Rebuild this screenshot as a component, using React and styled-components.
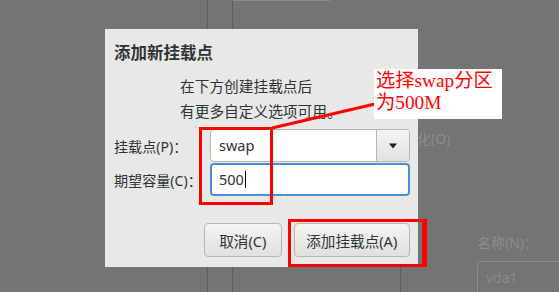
import React from 'react'
import styled, { createGlobalStyle } from 'styled-components'

const Global = createGlobalStyle`
  html, body { margin: 0; padding: 0; }
  body {
    width: 559px;
    height: 292px;
    overflow: hidden;
    font-family: "Noto Sans", "Noto Sans CJK SC", sans-serif;
  }
`

const Screen = styled.div`
  position: relative;
  width: 559px;
  height: 292px;
  background: #747474;
  display: flex;
  overflow: hidden;
`

const Pane = styled.div`
  width: ${p => p.w}px;
  height: 100%;
  border-right: 1px solid #5f5f5f;
  flex-shrink: 0;
  box-sizing: border-box;
`

const Main = styled.div`
  flex: 1;
  display: flex;
  flex-direction: column;
  color: #8c8c8c;
  font-size: 14px;
`

const TopButton = styled.div`
  width: 97px;
  height: 11px;
  border: 1px solid #8a8a8a;
  border-top: none;
  border-radius: 0 0 4px 4px;
  background: #7a7a7a;
  box-sizing: border-box;
`

const FaintText = styled.div`
  margin: 128px 0 0 184px;
  height: 20px;
  line-height: 20px;
`

const BottomArea = styled.div`
  flex: 1;
  display: flex;
  margin-top: 92px;
`

const BottomLine = styled.div`
  width: 167px;
  border-right: 1px solid #5f5f5f;
  margin-top: 23px;
`

const Field = styled.div`
  margin-left: 76px;
  flex: 1;
  display: flex;
  flex-direction: column;
`

const FieldLabel = styled.div`
  height: 20px;
  line-height: 20px;
  margin-top: -8px;
`

const FieldInput = styled.div`
  margin-top: 8px;
  flex: 1;
  border: 1px solid #8a8a8a;
  border-right: none;
  border-bottom: none;
  border-radius: 4px 0 0 0;
  padding: 6px 8px;
  color: #8a8a8a;
`

const Dialog = styled.div`
  position: absolute;
  left: 105px;
  top: 29px;
  width: 313px;
  height: 238px;
  background: #e8e8e7;
  box-sizing: border-box;
  padding: 9px 8px 0 9px;
  color: #2e3436;
  display: flex;
  flex-direction: column;
`

const Title = styled.div`
  font-size: 16.5px;
  font-weight: bold;
  line-height: 28px;
  font-family: "Noto Sans CJK SC", sans-serif;
`

const Desc = styled.div`
  margin: 7px 0 0 66px;
  font-size: 14.7px;
  line-height: 25px;
  font-family: "Noto Sans CJK SC", sans-serif;
`

const Form = styled.div`
  margin-top: 6px;
  display: grid;
  grid-template-columns: 96px 200px;
  row-gap: 1px;
  align-items: center;
`

const Label = styled.div`
  font-size: 14.1px;
  font-family: "Noto Sans", "Noto Sans CJK SC", sans-serif;
`

const Combo = styled.div`
  height: 33px;
  display: flex;
  border: 1px solid #b6b6b3;
  border-radius: 4px;
  box-sizing: border-box;
  background: #fff;
  overflow: hidden;
`

const ComboText = styled.div`
  flex: 1;
  padding-left: 8px;
  line-height: 31px;
  font-size: 14.5px;
`

const ComboButton = styled.div`
  width: 32px;
  border-left: 1px solid #b6b6b3;
  background: linear-gradient(#f4f4f4, #e2e2e0);
  display: flex;
  align-items: center;
  justify-content: center;
`

const Entry = styled.div`
  height: 33px;
  border: 2px solid #4a90d9;
  border-radius: 4px;
  box-sizing: border-box;
  background: #fff;
  padding-left: 7px;
  line-height: 29px;
  font-size: 14.5px;
  display: flex;
  align-items: center;
`

const Caret = styled.span`
  display: inline-block;
  width: 1px;
  height: 17px;
  background: #000;
  margin-left: 1px;
`

const Buttons = styled.div`
  margin-top: 27px;
  display: flex;
  gap: 12px;
  padding-left: 90px;
`

const Button = styled.div`
  width: ${p => p.w}px;
  height: 34px;
  box-sizing: border-box;
  border: 1px solid #b6b6b3;
  border-radius: 4px;
  background: linear-gradient(#f4f4f3, #e0e0de);
  display: flex;
  align-items: center;
  justify-content: center;
  font-size: 14.6px;
  color: #2e3436;
  font-family: "Noto Sans", "Noto Sans CJK SC", sans-serif;
`

const Mark = styled.div`
  position: absolute;
  left: ${p => p.x}px;
  top: ${p => p.y}px;
  width: ${p => p.w}px;
  height: ${p => p.h}px;
  border: 3px solid #ff0000;
  border-right-width: ${p => p.r || 3}px;
  box-sizing: border-box;
`

const Note = styled.div`
  position: absolute;
  left: 374px;
  top: 69px;
  width: 128px;
  height: 50px;
  background: #fff;
  color: #ff0000;
  box-sizing: border-box;
  padding: 1px 0 0 2px;
  font-family: "Liberation Serif", "Noto Sans CJK SC", serif;
  font-size: 19.3px;
  line-height: 22px;
  white-space: nowrap;
`

const Arrow = styled.svg`
  position: absolute;
  left: 0;
  top: 0;
  pointer-events: none;
`

export default function App() {
  return (
    <>
      <Global />
      <Screen>
        <Pane w={208} />
        <Pane w={25} />
        <Main>
          <TopButton />
          <FaintText>化(O)</FaintText>
          <BottomArea>
            <BottomLine />
            <Field>
              <FieldLabel>名称(N)：</FieldLabel>
              <FieldInput>vda1</FieldInput>
            </Field>
          </BottomArea>
        </Main>

        <Dialog>
          <Title>添加新挂载点</Title>
          <Desc>
            在下方创建挂载点后<br />
            有更多自定义选项可用。
          </Desc>
          <Form>
            <Label>挂载点(P)：</Label>
            <Combo>
              <ComboText>swap</ComboText>
              <ComboButton>
                <svg width="10" height="6" viewBox="0 0 10 6">
                  <path d="M1 0.5 L9 0.5 L5 5.5 Z" fill="#1e1e1e" />
                </svg>
              </ComboButton>
            </Combo>
            <Label>期望容量(C)：</Label>
            <Entry>500<Caret /></Entry>
          </Form>
          <Buttons>
            <Button w={78}>取消(C)</Button>
            <Button w={117}>添加挂载点(A)</Button>
          </Buttons>
        </Dialog>

        <Mark x={199} y={127} w={74} h={78} />
        <Mark x={288} y={219} w={139} h={48} r={5} />
        <Arrow width="559" height="292">
          <line x1="272" y1="128" x2="375" y2="104" stroke="#ff0000" strokeWidth="3" />
        </Arrow>
        <Note>
          选择swap分区<br />
          为500M
        </Note>
      </Screen>
    </>
  )
}
